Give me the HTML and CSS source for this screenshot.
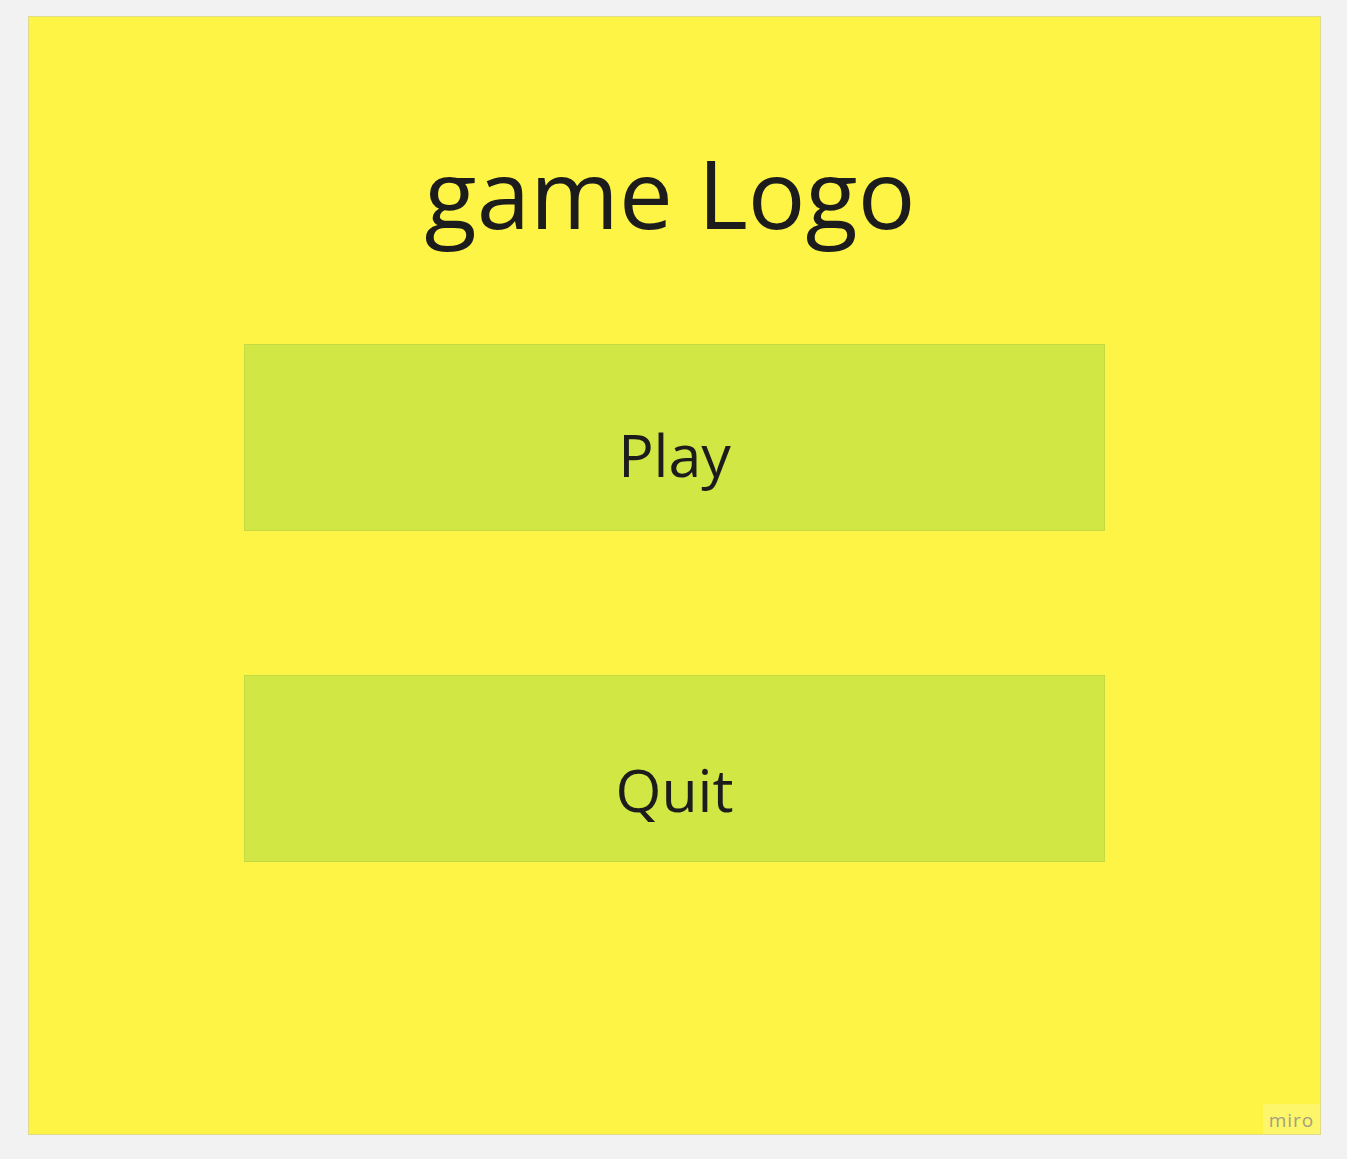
FILE: index.html
```html
<!DOCTYPE html>
<html>
<head>
<meta charset="utf-8">
<link rel="stylesheet" href="styles.css">
</head>
<body>
<div class="frame">
  <h1 class="logo">game Logo</h1>
  <div class="btn btn-play">Play</div>
  <div class="btn btn-quit">Quit</div>
  <div class="badge">miro</div>
</div>
</body>
</html>
```
FILE: styles.css
```css
html, body {
  margin: 0;
  padding: 0;
  background: #f2f2f2;
}
body {
  padding: 16px 0 0 28px;
  font-family: "Open Sans", "Liberation Sans", sans-serif;
}
.frame {
  position: relative;
  box-sizing: border-box;
  width: 1293px;
  height: 1119px;
  background: #fef445;
  border: 1px solid #e0da8c;
  display: flex;
  flex-direction: column;
  align-items: center;
}
.logo {
  margin: 109px 9px 0 0;
  font-weight: 400;
  font-size: 96px;
  line-height: 132px;
  color: #1c1c1c;
  height: 132px;
}
.btn {
  box-sizing: border-box;
  width: 861px;
  height: 187px;
  background: #d0e744;
  border: 1px solid #c3da45;
  display: flex;
  justify-content: center;
  align-items: flex-start;
  font-size: 59px;
  line-height: 76px;
  color: #1c1c1c;
}
.btn-play {
  margin-top: 86px;
  padding-top: 71px;
}
.btn-quit {
  margin-top: 144px;
  padding-top: 75px;
}
.badge {
  position: absolute;
  right: 0;
  bottom: 0;
  width: 57px;
  height: 30px;
  background: rgba(255, 255, 255, 0.2);
  color: #a3a080;
  font-size: 19px;
  line-height: 32px;
  letter-spacing: 1px;
  text-align: center;
}
```
